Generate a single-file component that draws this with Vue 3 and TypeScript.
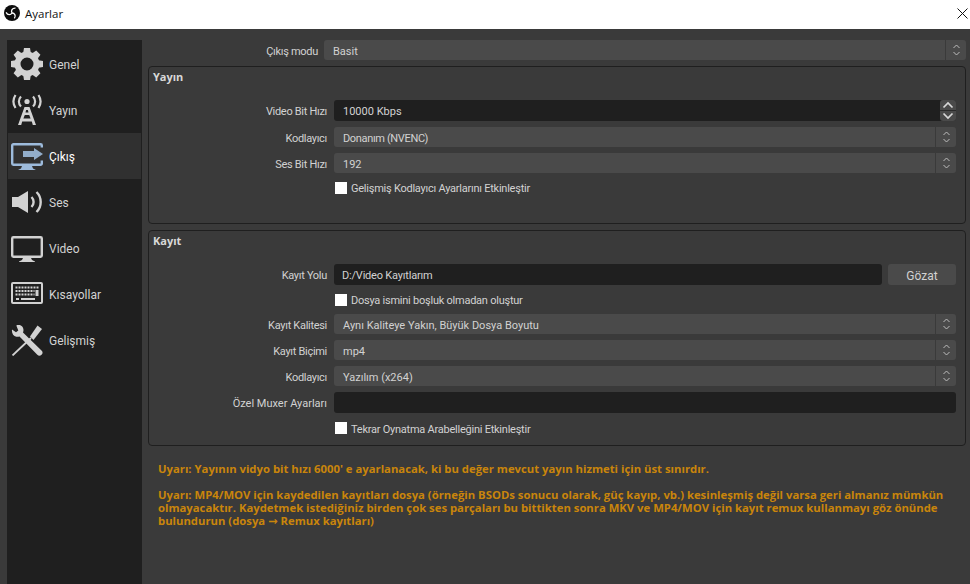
<script setup lang="ts">
const nav = ['Genel', 'Yayın', 'Çıkış', 'Ses', 'Video', 'Kısayollar', 'Gelişmiş']
const teeth = [0, 45, 90, 135, 180, 225, 270, 315]
</script>

<template>
  <div class="window">
    <header class="titlebar">
      <svg class="logo" viewBox="0 0 16 16" width="16" height="16">
        <circle cx="8" cy="8" r="8" fill="#0c0c0c" />
        <g v-for="r in [0, 120, 240]" :key="r" :transform="`rotate(${r} 8 8)`">
          <path d="M8 8C6.800 5.800 8 3 11.500 3.200" stroke="#fff" stroke-width="1.300" fill="none" />
        </g>
      </svg>
      <span class="wintitle">Ayarlar</span>
      <svg class="close" viewBox="0 0 11 11" width="11" height="11"><path d="M.5.5l10 10M10.500.5l-10 10" stroke="#111" stroke-width="1" fill="none" /></svg>
    </header>
    <div class="body">
      <aside class="side">
        <div v-for="(n, i) in nav" :key="n" class="navitem" :class="{ on: i === 2 }">
          <span class="ico">
            <svg v-if="i === 0" viewBox="0 0 32 32" width="32" height="32">
              <circle cx="16" cy="16" r="9.500" stroke="#d2d2d2" stroke-width="6" fill="none" />
              <path v-for="t in teeth" :key="t" :transform="`rotate(${t} 16 16)`" d="M12 6l1-6h6l1 6z" fill="#d2d2d2" />
            </svg>
            <svg v-else-if="i === 1" viewBox="0 0 32 32" width="32" height="32">
              <circle cx="16" cy="7.500" r="2.600" fill="#d2d2d2" />
              <path d="M10 2.500a7 7 0 0 0 0 10M22 2.500a7 7 0 0 1 0 10M4.500 1a12 12 0 0 0 0 13M27.500 1a12 12 0 0 1 0 13" stroke="#d2d2d2" stroke-width="2.200" fill="none" />
              <path d="M13.500 13h5L25 31h-3.200l-1-3.500h-9.600l-1 3.500H7zM14.500 18.500h3l-.6-2.500h-1.800zM13.800 21l-1.400 3.500h7.200L18.200 21z" fill="#d2d2d2" fill-rule="evenodd" />
            </svg>
            <svg v-else-if="i === 2" viewBox="0 0 32 32" width="32" height="32">
              <path d="M30.800 7.500V5.500a1.200 1.200 0 0 0-1.200-1.200H2.400A1.200 1.200 0 0 0 1.200 5.500v18a1.200 1.200 0 0 0 1.200 1.200h27.200a1.200 1.200 0 0 0 1.200-1.200v-3" stroke="#9dbbdc" stroke-width="2.400" fill="none" />
              <path d="M11 26h10l1 2.500 3 1.500H7l3-1.500z" fill="#9dbbdc" />
              <path d="M12 11h11V8l9 6-9 6v-3H12z" fill="#92adca" />
            </svg>
            <svg v-else-if="i === 3" viewBox="0 0 32 32" width="32" height="32">
              <path d="M1 11h6L17 5v22L7 21H1z" fill="#d2d2d2" />
              <path d="M20.500 11a7 7 0 0 1 0 10" stroke="#d2d2d2" stroke-width="2.400" fill="none" />
              <path d="M25.500 6a14 14 0 0 1 0 20" stroke="#d2d2d2" stroke-width="2.400" fill="none" />
            </svg>
            <svg v-else-if="i === 4" viewBox="0 0 32 32" width="32" height="32">
              <rect x="1.200" y="5.200" width="29.600" height="19.600" rx="1.200" stroke="#d2d2d2" stroke-width="2.400" fill="none" />
              <path d="M12 26h8l1 2 3 1.500V30H8v-.5l3-1.500z" fill="#d2d2d2" />
            </svg>
            <svg v-else-if="i === 5" viewBox="0 0 32 32" width="32" height="32">
              <rect x="1" y="5" width="30" height="20" rx="1" stroke="#d2d2d2" stroke-width="2" fill="none" />
              <path d="M4.500 9.500h23M4.500 13h19M4.500 16.500h19" stroke="#d2d2d2" stroke-width="2" stroke-dasharray="2 1" fill="none" />
              <path d="M5 21h3M10 21h14" stroke="#d2d2d2" stroke-width="2" fill="none" />
              <path d="M24.500 12h3v6h-3z" fill="#d2d2d2" />
            </svg>
            <svg v-else viewBox="0 0 32 32" width="32" height="32">
              <path d="M26.500 1.500l4.500 3.500-8.500 11-3.500-3.500z" fill="#d2d2d2" />
              <path d="M20 14L1.500 31.500" stroke="#d2d2d2" stroke-width="1.800" />
              <path d="M1 5.500l4 2.800 2.300-1.800-2-5C8.500 0 12.500 2 12.500 6c0 1-.2 1.800-.5 2.500L30.500 26.500a3 3 0 0 1-4.200 4.300L8.500 12.500c-1 .3-2.200.5-3.200.2C2.300 12 .5 9 1 5.500z" fill="#d2d2d2" />
            </svg>
          </span>
          <span class="navlabel">{{ n }}</span>
        </div>
      </aside>

      <main class="content">
        <div class="toprow">
          <label class="lab">Çıkış modu</label>
          <div class="select wide">Basit<span class="arrows"><svg viewBox="0 0 9 14" width="9" height="14"><path d="M1.500 5L4.500 2l3 3M1.500 9l3 3 3-3" stroke="#bdbdbd" fill="none" /></svg></span></div>
        </div>

        <section class="group yayin">
          <h3>Yayın</h3>
          <div class="rows">
            <label class="lab">Video Bit Hızı</label>
            <div class="spin">10000 Kbps
              <span class="spinbtns">
                <span class="sb"><svg viewBox="0 0 12 8" width="12" height="8"><path d="M1.500 6.500L6 2l4.500 4.500" stroke="#d8d8d8" stroke-width="1.700" fill="none" /></svg></span>
                <span class="sb"><svg viewBox="0 0 12 8" width="12" height="8"><path d="M1.500 1.500L6 6l4.500-4.500" stroke="#d8d8d8" stroke-width="1.700" fill="none" /></svg></span>
              </span>
            </div>
            <label class="lab">Kodlayıcı</label>
            <div class="select tight">Donanım (NVENC)<span class="arrows"><svg viewBox="0 0 9 14" width="9" height="14"><path d="M1.500 5L4.500 2l3 3M1.500 9l3 3 3-3" stroke="#bdbdbd" fill="none" /></svg></span></div>
            <label class="lab">Ses Bit Hızı</label>
            <div class="select">192<span class="arrows"><svg viewBox="0 0 9 14" width="9" height="14"><path d="M1.500 5L4.500 2l3 3M1.500 9l3 3 3-3" stroke="#bdbdbd" fill="none" /></svg></span></div>
            <span></span>
            <div class="check"><i></i>Gelişmiş Kodlayıcı Ayarlarını Etkinleştir</div>
          </div>
        </section>

        <section class="group kayit">
          <h3>Kayıt</h3>
          <div class="rows">
            <label class="lab">Kayıt Yolu</label>
            <div class="pathrow"><div class="input">D:/Video Kayıtlarım</div><button class="btn">Gözat</button></div>
            <span></span>
            <div class="check"><i></i>Dosya ismini boşluk olmadan oluştur</div>
            <label class="lab">Kayıt Kalitesi</label>
            <div class="select">Aynı Kaliteye Yakın, Büyük Dosya Boyutu<span class="arrows"><svg viewBox="0 0 9 14" width="9" height="14"><path d="M1.500 5L4.500 2l3 3M1.500 9l3 3 3-3" stroke="#bdbdbd" fill="none" /></svg></span></div>
            <label class="lab">Kayıt Biçimi</label>
            <div class="select">mp4<span class="arrows"><svg viewBox="0 0 9 14" width="9" height="14"><path d="M1.500 5L4.500 2l3 3M1.500 9l3 3 3-3" stroke="#bdbdbd" fill="none" /></svg></span></div>
            <label class="lab">Kodlayıcı</label>
            <div class="select">Yazılım (x264)<span class="arrows"><svg viewBox="0 0 9 14" width="9" height="14"><path d="M1.500 5L4.500 2l3 3M1.500 9l3 3 3-3" stroke="#bdbdbd" fill="none" /></svg></span></div>
            <label class="lab wide-lab">Özel Muxer Ayarları</label>
            <div class="input"></div>
            <span></span>
            <div class="check"><i></i>Tekrar Oynatma Arabelleğini Etkinleştir</div>
          </div>
        </section>

        <div class="warn">
          <p>Uyarı: Yayının vidyo bit hızı 6000' e ayarlanacak, ki bu değer mevcut yayın hizmeti için üst sınırdır.</p>
          <p>Uyarı: MP4/MOV için kaydedilen kayıtları dosya (örneğin BSODs sonucu olarak, güç kayıp, vb.) kesinleşmiş değil varsa geri almanız mümkün olmayacaktır. Kaydetmek istediğiniz birden çok ses parçaları bu bittikten sonra MKV ve MP4/MOV için kayıt remux kullanmayı göz önünde bulundurun (dosya → Remux kayıtları)</p>
        </div>
      </main>
    </div>
  </div>
</template>

<style>
html, body { margin: 0; background: #3a3a3a; }
</style>

<style scoped>
.window {
  width: 970px; height: 584px; overflow: hidden; display: flex; flex-direction: column;
  font-family: "Roboto", "Open Sans", sans-serif; font-size: 11px; color: #d2d2d2;
}
.titlebar { height: 29px; flex: none; background: #fff; display: flex; align-items: center; padding: 0 2px 0 4px; }
.logo { flex: none; margin-top: -3px; }
.wintitle { margin-left: 5px; font-family: "Open Sans", sans-serif; font-size: 11.500px; color: #111; flex: 1; margin-top: -2px; }
.close { flex: none; margin-top: -3px; }
.body { flex: 1; display: flex; background: #3a3a3a; min-height: 0; }
.side { width: 135px; margin: 11px 6px 0 7px; padding-top: 1px; background: #1f1f1f; flex: none; }
.navitem { height: 46px; display: flex; align-items: center; padding-left: 4px; color: #d2d2d2; }
.navitem.on { background: #303030; color: #fff; margin: 0 1px; padding-left: 3px; }
.ico { width: 32px; height: 32px; display: block; flex: none; }
.navlabel { margin-left: 6px; font-size: 12px; margin-top: 1px; }
.content { width: 822px; flex: none; padding-top: 11px; box-sizing: border-box; }
.toprow { display: flex; height: 20px; margin-bottom: 6px; }
.toprow .lab { width: 170px; }
.lab { text-align: right; line-height: 24px; height: 20px; color: #d2d2d2; letter-spacing: -0.3px; align-self: start; }
.lab.wide-lab { letter-spacing: 0; }
.toprow .select { margin-left: 6px; width: 642px; }
.select, .input, .spin {
  position: relative; height: 20px; line-height: 24px; border-radius: 3px; box-sizing: border-box; padding-left: 9px; color: #d2d2d2;
}
.select { background: #4a4a4a; }
.select.tight { letter-spacing: -0.35px; }
.arrows {
  position: absolute; right: 0; top: 0; bottom: 0; width: 20px; border-left: 1px solid #3a3a3a; display: flex; align-items: center; justify-content: center;
}
.input { background: #1f1f1f; height: 21px; line-height: 23px; padding-left: 8px; letter-spacing: -0.2px; }
.spin { background: #1f1f1f; height: 21px; line-height: 23px; }
.spinbtns { position: absolute; right: 0; top: 0; width: 16px; height: 21px; display: flex; flex-direction: column; }
.sb { flex: 1; background: #4a4a4a; display: flex; align-items: center; justify-content: center; }
.sb:first-child { border-radius: 3px 3px 0 0; }
.sb:last-child { border-radius: 0 0 3px 3px; border-top: 1px solid #2a2a2a; }
.group { width: 818px; box-sizing: border-box; border: 1px solid #1f1f1f; border-radius: 4px; margin-bottom: 6px; }
.group h3 { margin: 0; font-family: "Open Sans", sans-serif; font-size: 11px; font-weight: 700; color: #d8d8d8; padding: 2px 0 0 4px; line-height: 15px; }
.yayin { height: 158px; }
.kayit { height: 216px; }
.rows { display: grid; grid-template-columns: 178px 622px; column-gap: 7px; align-items: center; row-gap: 6px; margin-top: 16px; }
.yayin .rows { grid-template-rows: 21px 20px 20px 17px; }
.kayit .rows { grid-template-rows: 21px 17px 20px 20px 20px 21px 18px; }
.check { display: flex; align-items: center; letter-spacing: -0.24px; padding-top: 2px; }
.check i { width: 12px; height: 12px; background: #fff; display: block; margin: -2px 4px 0 1px; flex: none; }
.pathrow { display: flex; gap: 6px; }
.pathrow .input { width: 548px; }
.btn {
  width: 68px; height: 21px; border: 0; border-radius: 3px; background: #4a4a4a; color: #d2d2d2; font: inherit; font-size: 12px; padding: 2px 0 0;
}
.warn { margin: 16px 0 0 10px; width: 800px; font-family: "Open Sans", "DejaVu Sans", sans-serif; color: #c9850b; font-weight: 700; line-height: 13px; font-size: 11.300px; }
.warn p { margin: 0 0 13px; }
</style>
